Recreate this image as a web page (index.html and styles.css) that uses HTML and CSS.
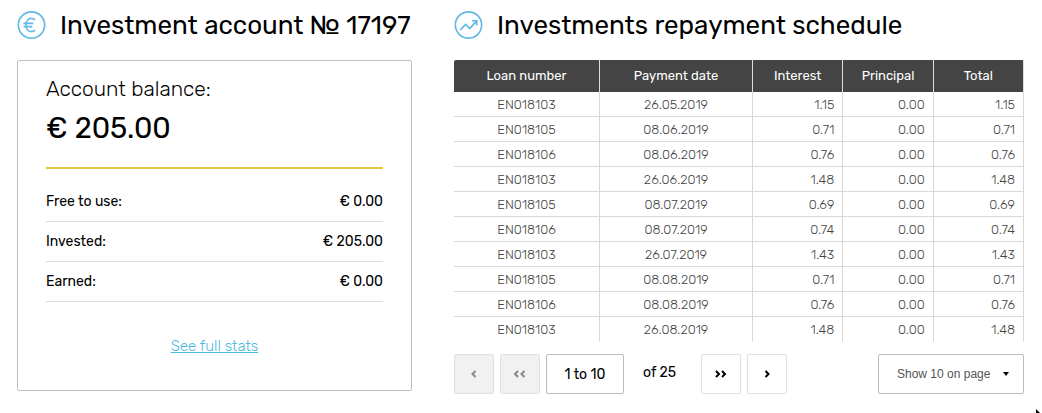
FILE: index.html
```html
<!DOCTYPE html>
<html lang="en">
<head>
    <meta charset="UTF-8">
    <meta name="viewport" content="width=device-width, initial-scale=1.0">
    <title>Investment account</title>
    <link rel="stylesheet" href="styles.css">
</head>
<body>
    <main class="dashboard">
        <section class="account">
            <h2 class="title">
                <svg class="title-icon" viewBox="0 0 30 30" aria-hidden="true">
                    <circle cx="15" cy="15" r="13.6"/>
                    <path d="M18.7 9.8C17.5 8.700 16.300 8.200 14.800 8.200C11.500 8.200 9.400 11 9.400 15S11.500 21.800 14.800 21.800C16.300 21.800 17.500 21.300 18.700 20.200M6.700 13.300H16.800M6.700 16.700H15.800"/>
                </svg>
                Investment account № 17197
            </h2>
            <div class="card">
                <p class="balance-label">Account balance:</p>
                <p class="balance">€ 205.00</p>
                <dl class="stats">
                    <div class="stat"><dt>Free to use:</dt><dd>€ 0.00</dd></div>
                    <div class="stat"><dt>Invested:</dt><dd>€ 205.00</dd></div>
                    <div class="stat"><dt>Earned:</dt><dd>€ 0.00</dd></div>
                </dl>
                <a class="stats-link" href="#">See full stats</a>
            </div>
        </section>

        <section class="schedule">
            <h2 class="title">
                <svg class="title-icon" viewBox="0 0 30 30" aria-hidden="true">
                    <circle cx="15" cy="15" r="13.6"/>
                    <path d="M6.500 20L12 14.500L16.200 18.700L23 11.200M18.700 10.600H23.500V15.400"/>
                </svg>
                Investments repayment schedule
            </h2>
            <table class="loans">
                <colgroup>
                    <col class="col-loan">
                    <col class="col-date">
                    <col class="col-sum">
                    <col class="col-sum">
                    <col class="col-sum">
                </colgroup>
                <thead>
                    <tr><th>Loan number</th><th>Payment date</th><th>Interest</th><th>Principal</th><th>Total</th></tr>
                </thead>
                <tbody>
                    <tr><td>EN018103</td><td>26.05.2019</td><td>1.15</td><td>0.00</td><td>1.15</td></tr>
                    <tr><td>EN018105</td><td>08.06.2019</td><td>0.71</td><td>0.00</td><td>0.71</td></tr>
                    <tr><td>EN018106</td><td>08.06.2019</td><td>0.76</td><td>0.00</td><td>0.76</td></tr>
                    <tr><td>EN018103</td><td>26.06.2019</td><td>1.48</td><td>0.00</td><td>1.48</td></tr>
                    <tr><td>EN018105</td><td>08.07.2019</td><td>0.69</td><td>0.00</td><td>0.69</td></tr>
                    <tr><td>EN018106</td><td>08.07.2019</td><td>0.74</td><td>0.00</td><td>0.74</td></tr>
                    <tr><td>EN018103</td><td>26.07.2019</td><td>1.43</td><td>0.00</td><td>1.43</td></tr>
                    <tr><td>EN018105</td><td>08.08.2019</td><td>0.71</td><td>0.00</td><td>0.71</td></tr>
                    <tr><td>EN018106</td><td>08.08.2019</td><td>0.76</td><td>0.00</td><td>0.76</td></tr>
                    <tr><td>EN018103</td><td>26.08.2019</td><td>1.48</td><td>0.00</td><td>1.48</td></tr>
                </tbody>
            </table>
            <div class="pager">
                <div class="pager-group">
                    <button class="page-btn" type="button" aria-label="Previous" disabled>
                        <svg viewBox="0 0 16 8" aria-hidden="true"><path d="M9.500 1L6.500 4L9.500 7"/></svg>
                    </button>
                    <button class="page-btn" type="button" aria-label="First" disabled>
                        <svg viewBox="0 0 16 8" aria-hidden="true"><path d="M6 1L3 4L6 7M12.500 1L9.500 4L12.500 7"/></svg>
                    </button>
                </div>
                <label class="range"><input class="range-input" type="text" value="1 to 10"> of 25</label>
                <div class="pager-group">
                    <button class="page-btn" type="button" aria-label="Last">
                        <svg viewBox="0 0 16 8" aria-hidden="true"><path d="M3 1L6 4L3 7M9 1L12 4L9 7"/></svg>
                    </button>
                    <button class="page-btn" type="button" aria-label="Next">
                        <svg viewBox="0 0 16 8" aria-hidden="true"><path d="M6.500 1L9.500 4L6.500 7"/></svg>
                    </button>
                </div>
                <div class="page-size">
                    <select class="page-size-select" aria-label="Rows">
                        <option>Show 10 on page</option>
                    </select>
                </div>
            </div>
        </section>
    </main>
    <svg class="cursor" viewBox="0 0 6 4" aria-hidden="true"><path d="M0 0L4 4H0Z"/></svg>
</body>
</html>
```
FILE: styles.css
```css
* { box-sizing: border-box; }
body { margin: 0; background: #fff; color: #000; font-family: Rubik, Roboto, sans-serif; font-size: 14px; }
h2, p, dl, dd { margin: 0; }

.dashboard { display: grid; grid-template-columns: minmax(0, 395fr) minmax(0, 570fr); gap: 42px; padding: 10px 18px 0 17px; }

.title { display: flex; align-items: center; gap: 14px; height: 30px; margin-bottom: 20px; font-size: 26px; font-weight: 400; white-space: nowrap; }
.title-icon { flex: none; width: 29px; height: 30px; fill: none; stroke: #62b8e5; stroke-width: 1.7; }

/* account card */
.card { display: flex; flex-direction: column; padding: 15px 28px 33px; border: 1px solid #bfbfbf; border-radius: 2px; }
.balance-label { line-height: 26px; font-size: 21px; font-weight: 300; }
.balance { padding: 8px 0 21px; border-bottom: 2px solid #e2c840; line-height: 36px; font-size: 29px; }
.stats { padding-top: 13px; }
.stat { display: flex; justify-content: space-between; border-bottom: 1px solid #ddd; line-height: 39px; }
.stats-link { align-self: center; margin-top: 33px; color: #4bb7e3; line-height: 22px; font-size: 15px; font-weight: 300; }

/* repayment table */
.loans { width: 100%; table-layout: fixed; border-collapse: separate; border-spacing: 0; font-size: 13px; }
.col-loan { width: 146px; }
.col-date { width: 153px; }
.loans th { height: 32px; padding: 0 0 2px; border-right: 1px solid #ddd; background: #444; color: #fff; font-weight: 400; }
.loans th:first-child { border-top-left-radius: 2px; }
.loans td { height: 25px; padding: 0 8px; border-right: 1px solid #d8d8d8; border-bottom: 1px solid #d8d8d8; color: #444; font-weight: 300; text-align: right; }
.loans td:nth-child(-n+2) { text-align: center; }
.loans tr:last-child td { border-bottom: 0; }

/* pagination */
.pager { display: flex; margin-top: 12px; }
.pager-group { display: flex; gap: 6px; }
.page-btn { display: flex; align-items: center; justify-content: center; width: 40px; height: 40px; padding: 0; border: 1px solid #e0e0e0; border-radius: 2px; background: #fff; cursor: pointer; }
.page-btn svg { width: 16px; height: 8px; fill: none; stroke: #000; stroke-width: 2; }
.page-btn:disabled { background: #f1f1f1; cursor: default; }
.page-btn:disabled svg { stroke: #888; }
.range { display: flex; gap: 19px; margin: 0 25px 0 6px; line-height: 37px; }
.range-input { width: 78px; height: 40px; padding: 0; border: 1px solid #bbb; border-radius: 2px; background: #fff; font: inherit; text-align: center; }
.page-size { position: relative; width: 146px; margin-left: auto; }
.page-size::after { content: ""; position: absolute; top: 18px; right: 15px; border: 3px solid transparent; border-top: 4px solid #000; border-bottom: 0; pointer-events: none; }
.page-size-select { width: 100%; height: 40px; padding: 0 18px; border: 1px solid #bbb; border-radius: 2px; appearance: none; background: #fff; color: #555; font-family: "Liberation Sans", Arial, sans-serif; font-size: 12px; }

.cursor { position: fixed; right: 0; bottom: 0; width: 6px; height: 4px; }
```
